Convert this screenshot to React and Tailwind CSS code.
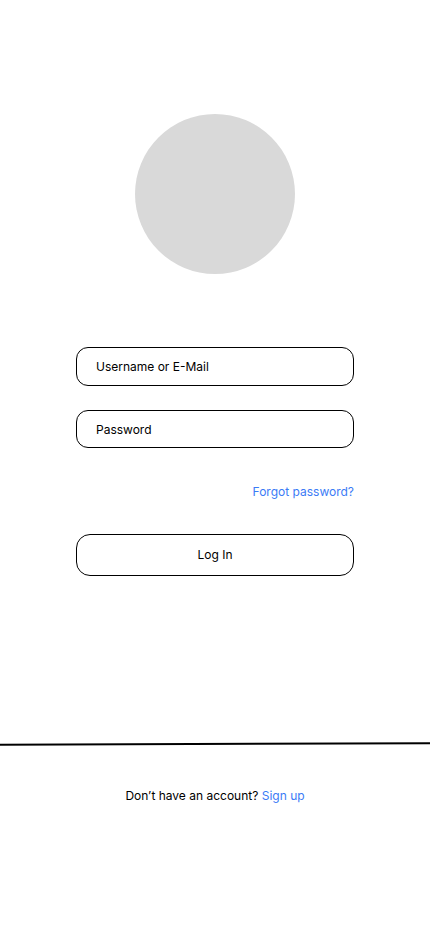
export default function App() {
  return (
    <div className="w-[430px] h-[932px] bg-white flex flex-col items-center" style={{ fontFamily: "Inter, 'Liberation Sans', sans-serif" }}>
      <div className="mt-[114px] w-[160px] h-[160px] rounded-full bg-[#d9d9d9]" />
      <div className="mt-[73px] w-[278px] flex flex-col">
        <div className="h-[39px] rounded-[12px] border border-black flex items-center pl-[19px] pt-px text-[12px] text-black">Username or E-Mail</div>
        <div className="mt-[24px] h-[38px] rounded-[12px] border border-black flex items-center pl-[19px] pt-px text-[12px] text-black">Password</div>
        <div className="mt-[36px] flex justify-end text-[12px] text-[#3b7bf6] leading-[16px]">Forgot password?</div>
        <div className="mt-[34px] h-[42px] rounded-[14px] border border-black flex items-center justify-center text-[12px] text-black">Log In</div>
      </div>
      <div className="mt-[167px] w-full h-[2px] bg-black -rotate-[0.2deg]" />
      <div className="mt-[43px] text-[12px] text-black leading-[16px]">
        Don’t have an account? <span className="text-[#3b7bf6]">Sign up</span>
      </div>
    </div>
  );
}
